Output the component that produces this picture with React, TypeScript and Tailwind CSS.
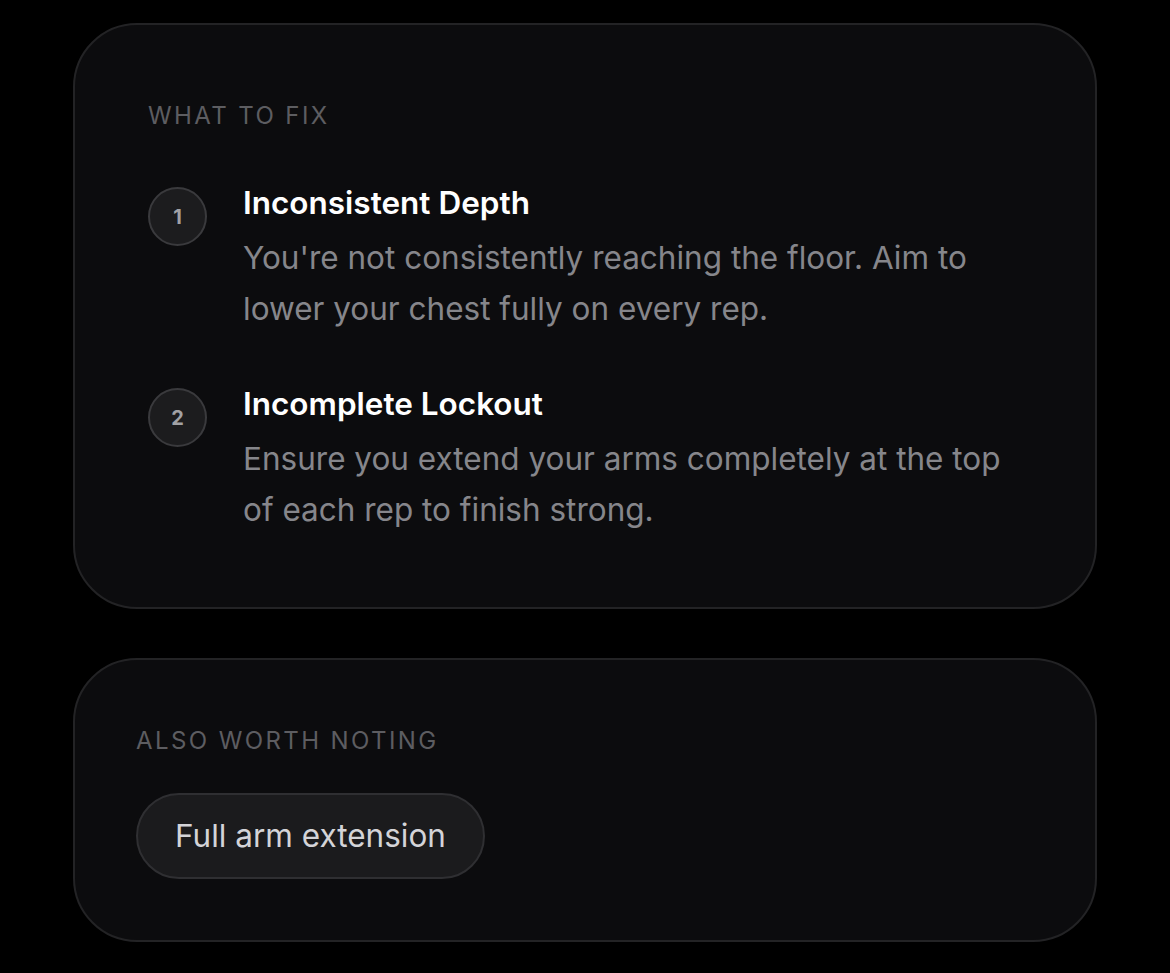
export default function App() {
  const items = [
    {
      n: "1",
      title: "Inconsistent Depth",
      desc: "You're not consistently reaching the floor. Aim to lower your chest fully on every rep.",
    },
    {
      n: "2",
      title: "Incomplete Lockout",
      desc: "Ensure you extend your arms completely at the top of each rep to finish strong.",
    },
  ];
  return (
    <div
      className="min-h-[973px] w-[1170px] bg-black pl-[73px] pt-[23px]"
      style={{ fontFamily: "Inter, 'Noto Sans', sans-serif" }}
    >
      <div className="flex w-[1024px] flex-col gap-[49px]">
        <div className="rounded-[64px] border-2 border-[#232325] bg-[#0c0c0e] pb-[72px] pl-[73px] pr-[40px] pt-[76px]">
          <div className="text-[24px] leading-[30px] tracking-[0.1em] text-[#5d5d61]">WHAT TO FIX</div>
          <div className="mt-[52px] flex flex-col gap-[50px]">
            {items.map((it) => (
              <div key={it.n} className="flex items-start gap-[36px]">
                <div className="mt-[4px] flex h-[59px] w-[59px] shrink-0 items-center justify-center rounded-full border-2 border-[#3a3a3d] bg-[#1c1c1e] text-[20px] font-bold text-[#a1a1a5]">
                  {it.n}
                </div>
                <div className="flex flex-col">
                  <div className="text-[31.5px] font-semibold leading-[40px] text-white">{it.title}</div>
                  <div className="mt-[9px] max-w-[775px] text-[31.5px] leading-[51px] text-[#86868b]">{it.desc}</div>
                </div>
              </div>
            ))}
          </div>
        </div>
        <div className="rounded-[64px] border-2 border-[#232325] bg-[#0c0c0e] pb-[61px] pl-[61px] pt-[66px]">
          <div className="text-[24px] leading-[30px] tracking-[0.1em] text-[#5d5d61]">ALSO WORTH NOTING</div>
          <div className="mt-[37px] flex">
            <div className="flex h-[86px] items-center rounded-full border-2 border-[#2f2f32] bg-[#1b1b1d] px-[37px] text-[31.5px] text-[#d4d4d8]">
              Full arm extension
            </div>
          </div>
        </div>
      </div>
    </div>
  );
}
